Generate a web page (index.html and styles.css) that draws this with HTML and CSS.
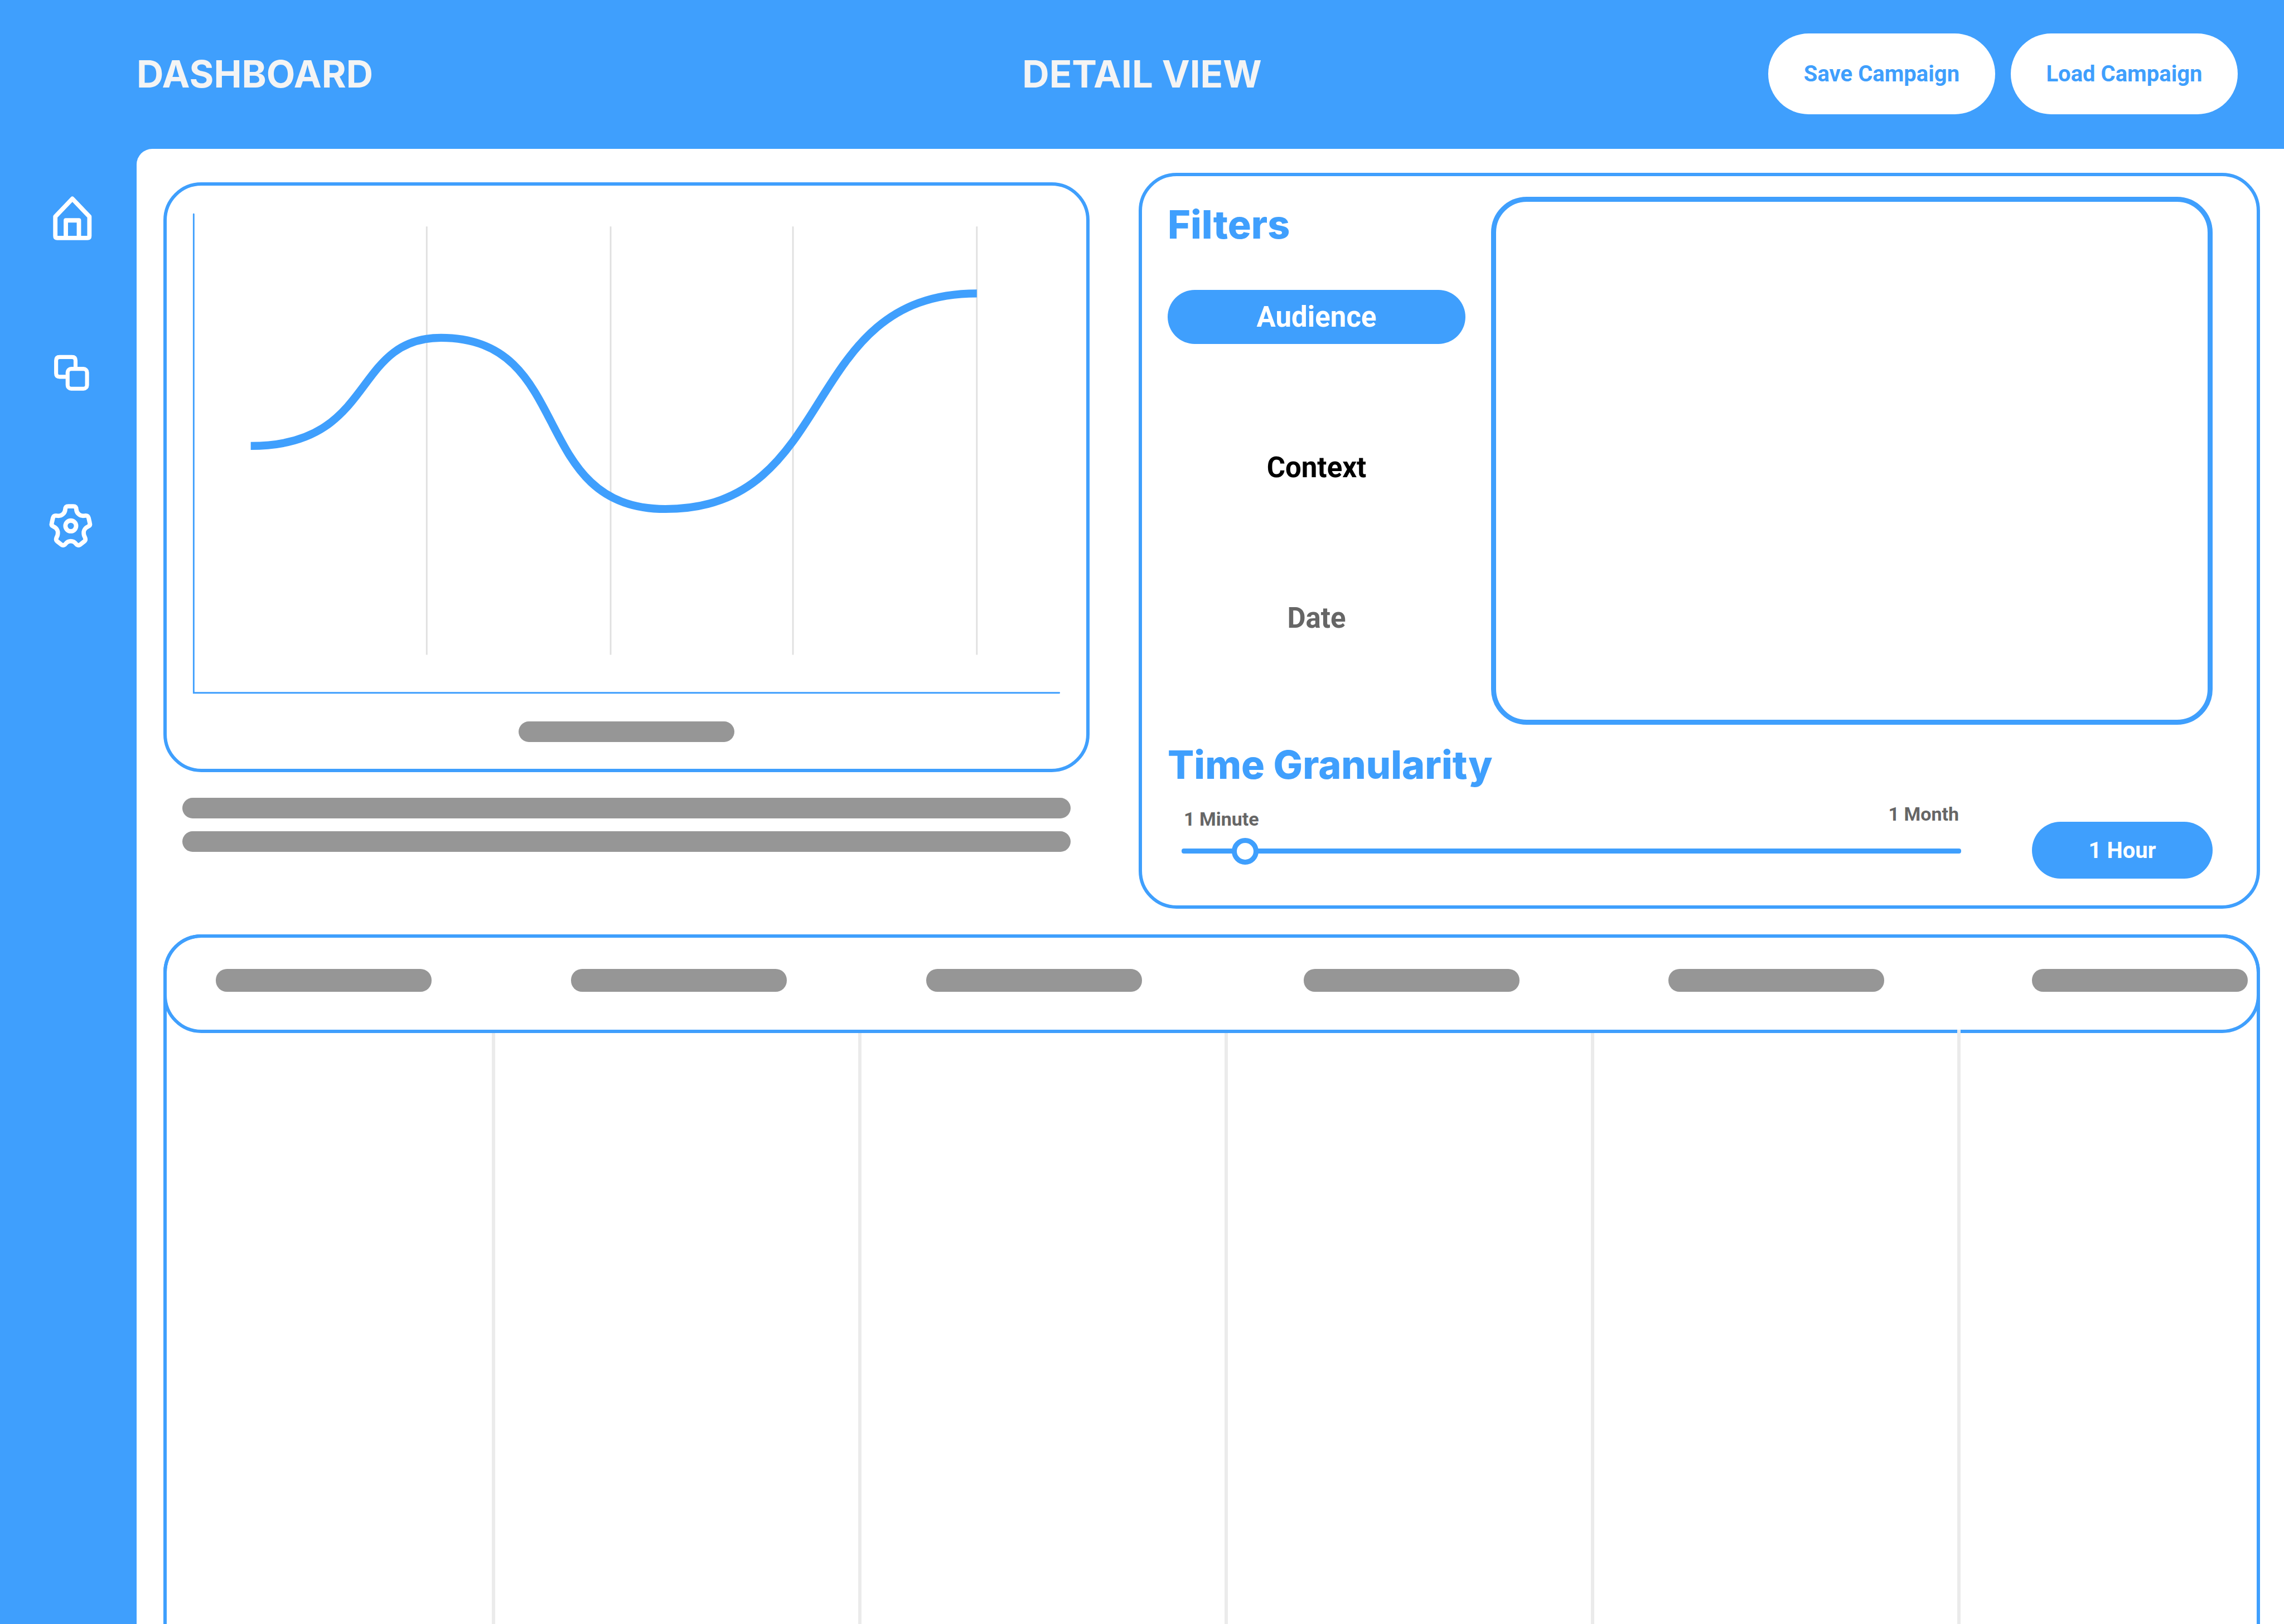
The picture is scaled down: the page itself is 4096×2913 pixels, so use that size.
FILE: index.html
```html
<!DOCTYPE html>
<html lang="en">
<head>
<meta charset="utf-8">
<title>Dashboard</title>
<link rel="stylesheet" href="styles.css">
</head>
<body>
<div class="page">
  <header class="topbar">
    <h1 class="heading topbar-title">DASHBOARD</h1>
    <h2 class="heading">DETAIL VIEW</h2>
    <div class="topbar-actions">
      <button class="pill pill-light" type="button">Save Campaign</button>
      <button class="pill pill-light" type="button">Load Campaign</button>
    </div>
  </header>
  <nav class="sidebar" aria-label="Main">
    <a href="#home" aria-label="Home">
      <svg class="nav-icon" viewBox="112 482 135 135"><path d="M139 546 L182 501 L225 546 V595 Q225 600 220 600 H144 Q139 600 139 595 Z M165.500 600 V555.500 H198.500 V600"/></svg>
    </a>
    <a href="#copies" aria-label="Copies">
      <svg class="nav-icon nav-icon-thin" viewBox="112 870 135 135"><path d="M190 930 V909 Q190 900 181 900 H150 Q141 900 141 909 V941 Q141 950 150 950 H170"/><rect x="170" y="930" width="49" height="50" rx="9"/></svg>
    </a>
    <a href="#settings" aria-label="Settings">
      <svg class="nav-icon" viewBox="112 1258 135 135"><circle cx="178" cy="1326" r="13.500"/><path d="M164 1285 Q164 1276.500 172 1276.500 H184 Q192 1276.500 192 1285 C193 1294 201 1301.500 211 1300.500 C218 1299 221.500 1300 223 1306 L226 1319 Q228 1325 221 1328 C212 1332 209 1341 211.500 1350 C216 1359 216 1362 212 1365 L202 1373 C197 1376.500 193 1374 191 1371 C184 1362 172 1362 165 1371 C163 1374 159 1376.500 154 1373 L144 1365 C140 1362 140 1359 144.500 1350 C147 1341 144 1332 135 1328 Q128 1325 130 1319 L133 1306 C134.500 1300 138 1299 145 1300.500 C155 1301.500 163 1294 164 1285 Z"/></svg>
    </a>
  </nav>
  <main class="content">
    <div class="panels">
      <section class="chart-column" aria-label="Chart">
        <div class="card chart-card">
          <svg class="chart" viewBox="420 468 2320 1312">
            <path class="gridline" d="M1076 571 V1652 M1540 571 V1652 M2000 571 V1652 M2464 571 V1652"/>
            <path class="axis" d="M488 540 V1748 H2672"/>
            <path class="curve" d="M632 1125 C951 1125 884 852 1112 852 C1452 852 1330 1284 1678 1284 C2118 1284 2013 740 2464 740"/>
          </svg>
          <div class="bar bar-caption"></div>
        </div>
        <div class="chart-notes">
          <div class="bar"></div>
          <div class="bar"></div>
        </div>
      </section>
      <section class="card filter-card">
        <div class="filters">
          <div class="filter-list">
            <h2 class="heading heading-blue">Filters</h2>
            <div class="filter-tabs">
              <button class="tab tab-active" type="button">Audience</button>
              <button class="tab" type="button">Context</button>
              <button class="tab tab-muted" type="button">Date</button>
            </div>
          </div>
          <div class="filter-box"></div>
        </div>
        <h2 class="heading heading-blue granularity-title">Time Granularity</h2>
        <div class="granularity">
          <div class="slider">
            <div class="slider-labels">
              <label for="granularity">1 Minute</label>
              <span class="label-max">1 Month</span>
            </div>
            <input id="granularity" type="range" min="0" max="15" value="1">
          </div>
          <button class="pill pill-blue" type="button">1 Hour</button>
        </div>
      </section>
    </div>
    <section class="grid-card" aria-label="Details">
      <div class="card grid-head">
        <div class="bar bar-head"></div>
        <div class="bar bar-head"></div>
        <div class="bar bar-head"></div>
        <div class="bar bar-head"></div>
        <div class="bar bar-head"></div>
        <div class="bar bar-head"></div>
      </div>
      <div class="grid-body">
        <div class="grid-col"></div>
        <div class="grid-col"></div>
        <div class="grid-col"></div>
        <div class="grid-col"></div>
        <div class="grid-col grid-col-tall"></div>
        <div></div>
      </div>
    </section>
  </main>
</div>
</body>
</html>
```
FILE: styles.css
```css
:root {
  --blue: #3f9ffd;
  --grey: #969696;
  --line: #ebebeb;
}

* {
  box-sizing: border-box;
}

body {
  margin: 0;
  background: var(--blue);
  font-family: Roboto, "Liberation Sans", sans-serif;
}

button {
  border: 0;
  padding: 0;
  font: inherit;
}

.page {
  display: grid;
  grid-template-columns: 245px 1fr;
  grid-template-rows: auto 1fr;
  min-height: 100vh;
}

.heading {
  margin: 0;
  color: #f4f4f4;
  font: 700 67px/80px Inter, "Open Sans", sans-serif;
}

.heading-blue {
  color: var(--blue);
  font-size: 70px;
  font-weight: 800;
}

.topbar {
  grid-column: 1 / -1;
  display: grid;
  grid-template-columns: 1fr auto 1fr;
  align-items: center;
  padding: 60px 83px 62px;
}

.topbar-title {
  padding-left: 162px;
}

.topbar-actions {
  display: flex;
  justify-content: flex-end;
  gap: 28px;
}

.pill {
  border-radius: 80px;
  font-size: 40px;
  font-weight: 700;
}

.pill-light {
  width: 407px;
  height: 145px;
  background: #fff;
  color: var(--blue);
}

.pill-blue {
  width: 324px;
  height: 102px;
  margin-top: 34px;
  background: var(--blue);
  color: #fff;
}

.sidebar {
  display: flex;
  flex-direction: column;
  align-items: flex-start;
  gap: 180px;
  padding: 76px 0 0 80px;
}

.nav-icon {
  display: block;
  width: 96px;
  height: 96px;
  fill: none;
  stroke: #fff;
  stroke-width: 11;
  stroke-linejoin: round;
}

.nav-icon-thin {
  stroke-width: 10;
}

.content {
  display: flex;
  flex-direction: column;
  gap: 46px;
  padding: 43px 43px 0 48px;
  border-top-left-radius: 28px;
  background: #fff;
}

.panels {
  display: grid;
  grid-template-columns: 1661fr 2011fr;
  gap: 88px;
}

.card {
  border: 6px solid var(--blue);
  border-radius: 68px;
}

.chart-column {
  padding-top: 17px;
}

.chart-card {
  padding-bottom: 48px;
}

.chart {
  display: block;
  width: 100%;
  margin-bottom: 28px;
  fill: none;
}

.gridline {
  stroke: #e0e0e0;
  stroke-width: 4;
}

.axis {
  stroke: var(--blue);
  stroke-width: 4;
  stroke-linecap: round;
}

.curve {
  stroke: var(--blue);
  stroke-width: 20;
}

.bar {
  height: 37px;
  border-radius: 20px;
  background: var(--grey);
}

.bar-caption {
  width: 387px;
  margin: 0 auto;
}

.chart-notes {
  display: grid;
  gap: 23px;
  padding: 46px 34px 0;
}

.filter-card {
  padding: 37px 79px 48px 46px;
}

.filters {
  display: grid;
  grid-template-columns: 534fr 1294fr;
  gap: 46px;
}

.filter-list {
  padding-top: 10px;
}

.filter-box {
  height: 947px;
  border: 9px solid var(--blue);
  border-radius: 64px;
}

.filter-tabs {
  display: grid;
  gap: 173px;
  margin-top: 77px;
}

.tab {
  height: 97px;
  border-radius: 49px;
  background: none;
  color: #000;
  font-size: 51px;
  font-weight: 700;
}

.tab-active {
  background: var(--blue);
  color: #fff;
}

.tab-muted {
  color: #666;
}

.granularity-title {
  margin-top: 32px;
}

.granularity {
  display: flex;
  align-items: flex-start;
  gap: 127px;
  padding: 28px 0 0 25px;
}

.slider {
  flex: 1;
}

.slider-labels {
  display: flex;
  justify-content: space-between;
  align-items: flex-end;
  height: 49px;
  padding: 0 4px;
  color: #666;
  font-size: 34px;
  font-weight: 700;
  line-height: 40px;
}

.label-max {
  align-self: flex-start;
}

input[type="range"] {
  appearance: none;
  display: block;
  width: 100%;
  height: 48px;
  margin: 13px 0 0;
  background: none;
}

input[type="range"]::-webkit-slider-runnable-track {
  height: 9px;
  border-radius: 4px;
  background: var(--blue);
}

input[type="range"]::-webkit-slider-thumb {
  appearance: none;
  width: 48px;
  height: 48px;
  margin-top: -19px;
  border: 9px solid var(--blue);
  border-radius: 50%;
  background: #fff;
}

.grid-card {
  flex: 1;
  display: flex;
  flex-direction: column;
  border: 6px solid var(--blue);
  border-bottom: 0;
  border-radius: 68px 68px 0 0;
}

.grid-head {
  display: grid;
  grid-template-columns: 637fr 637fr 677fr 654fr 652fr 403fr;
  align-items: center;
  height: 177px;
  margin: -6px -6px 0;
  padding: 0 0 12px 88px;
}

.bar-head {
  width: 387px;
  height: 41px;
}

.grid-body {
  flex: 1;
  display: grid;
  grid-template-columns: 589fr 657fr 657fr 657fr 657fr 531fr;
}

.grid-col {
  border-right: 6px solid var(--line);
}

.grid-col-tall {
  margin-top: -6px;
}
```
